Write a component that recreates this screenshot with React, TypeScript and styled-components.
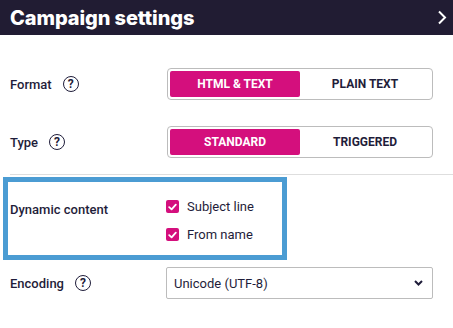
import React, { useState } from "react";
import styled, { createGlobalStyle } from "styled-components";

const GlobalStyle = createGlobalStyle`
  html, body {
    margin: 0;
    padding: 0;
    background: #fff;
  }
  body {
    font-family: Roboto, "Liberation Sans", sans-serif;
    color: #1f1d3a;
  }
`;

const PINK = "#d40f7d";
const NAVY = "#1f1d3a";

const Panel = styled.div`
  width: 453px;
  height: 328px;
  overflow: hidden;
  background: #fff;
`;

const Header = styled.div`
  height: 35px;
  background: #211c33;
  display: flex;
  align-items: center;
  justify-content: space-between;
  padding: 0 6px 0 10px;
  box-sizing: border-box;
`;

const Title = styled.h1`
  margin: 0;
  font-family: Inter, "Open Sans", sans-serif;
  font-weight: 800;
  font-size: 20px;
  letter-spacing: -0.1px;
  color: #fff;
`;

const Body = styled.div`
  padding: 0 20px 0 10px;
`;

const Row = styled.div<{ $top: number; $align?: string }>`
  display: grid;
  grid-template-columns: 157px 266px;
  align-items: ${(p) => p.$align || "center"};
  margin-top: ${(p) => p.$top}px;
`;

const Label = styled.div<{ $offset?: number }>`
  display: flex;
  align-items: center;
  gap: 11px;
  margin-top: ${(p) => p.$offset || 0}px;
  font-size: 13px;
  font-weight: 500;
  color: ${NAVY};
`;

const Help = styled.span`
  width: 14px;
  height: 14px;
  border: 1.6px solid ${NAVY};
  border-radius: 50%;
  display: inline-flex;
  align-items: center;
  justify-content: center;
  font-size: 12px;
  font-weight: 700;
  line-height: 1;
`;

const Toggle = styled.div`
  display: grid;
  grid-template-columns: 1fr 1fr;
  height: 32px;
  padding: 2px;
  box-sizing: border-box;
  border: 1px solid #bcbcbc;
  border-radius: 4px;
`;

const Option = styled.button<{ $active: boolean }>`
  border: none;
  border-radius: 2px;
  font-family: Roboto, "Liberation Sans", sans-serif;
  font-size: 12px;
  font-weight: 700;
  background: ${(p) => (p.$active ? PINK : "transparent")};
  color: ${(p) => (p.$active ? "#fff" : NAVY)};
  cursor: pointer;
  padding: 0;
`;

const Divider = styled.hr`
  border: none;
  border-top: 1px solid #dedede;
  margin: 16px -20px 0 0;
`;

const Highlight = styled.div`
  margin: 2px 0 0 -7px;
  width: 284px;
  height: 83px;
  box-sizing: border-box;
  border: 5px solid #4b9cd3;
  padding: 0 0 0 2px;
`;

const Checks = styled.div`
  display: flex;
  flex-direction: column;
  gap: 13px;
  margin: 4px 0 0 -1px;
`;

const Check = styled.label`
  display: flex;
  align-items: center;
  gap: 8px;
  font-size: 13px;
  color: ${NAVY};
  cursor: pointer;
`;

const Box = styled.span`
  width: 13px;
  height: 13px;
  border-radius: 2px;
  background: ${PINK};
  display: inline-flex;
  align-items: center;
  justify-content: center;
`;

const Select = styled.div`
  height: 32px;
  margin-left: -1px;
  box-sizing: border-box;
  border: 1px solid #bcbcbc;
  border-radius: 2px;
  display: flex;
  align-items: center;
  justify-content: space-between;
  padding: 0 9px 0 7px;
  font-size: 13px;
  color: ${NAVY};
`;

const Tick = () => (
  <svg width="9" height="8" viewBox="0 0 9 8">
    <path d="M1.2 4.2 L3.6 6.4 L7.8 1.6" fill="none" stroke="#fff" strokeWidth="1.8" strokeLinecap="round" strokeLinejoin="round" />
  </svg>
);

const Segmented = ({ options }: { options: string[] }) => {
  const [sel, setSel] = useState(0);
  return (
    <Toggle>
      {options.map((o, i) => (
        <Option key={o} $active={sel === i} onClick={() => setSel(i)}>
          {o}
        </Option>
      ))}
    </Toggle>
  );
};

const App = () => {
  return (
    <Panel>
      <GlobalStyle />
      <Header>
        <Title>Campaign settings</Title>
        <svg width="10" height="15" viewBox="0 0 10 15">
          <path d="M2 1.5 L8 7.5 L2 13.5" fill="none" stroke="#fff" strokeWidth="2" />
        </svg>
      </Header>
      <Body>
        <Row $top={33}>
          <Label>
            Format <Help>?</Help>
          </Label>
          <Segmented options={["HTML & TEXT", "PLAIN TEXT"]} />
        </Row>
        <Row $top={26}>
          <Label>
            Type <Help>?</Help>
          </Label>
          <Segmented options={["STANDARD", "TRIGGERED"]} />
        </Row>
        <Divider />
        <Highlight>
          <Row $top={13} $align="start">
            <Label $offset={7}>Dynamic content</Label>
            <Checks>
              <Check>
                <Box>
                  <Tick />
                </Box>
                Subject line
              </Check>
              <Check>
                <Box>
                  <Tick />
                </Box>
                From name
              </Check>
            </Checks>
          </Row>
        </Highlight>
        <Row $top={7}>
          <Label>
            Encoding <Help>?</Help>
          </Label>
          <Select>
            Unicode (UTF-8)
            <svg width="9" height="6" viewBox="0 0 9 6">
              <path d="M1 1 L4.5 4.5 L8 1" fill="none" stroke={NAVY} strokeWidth="2" />
            </svg>
          </Select>
        </Row>
      </Body>
    </Panel>
  );
};

export default App;
